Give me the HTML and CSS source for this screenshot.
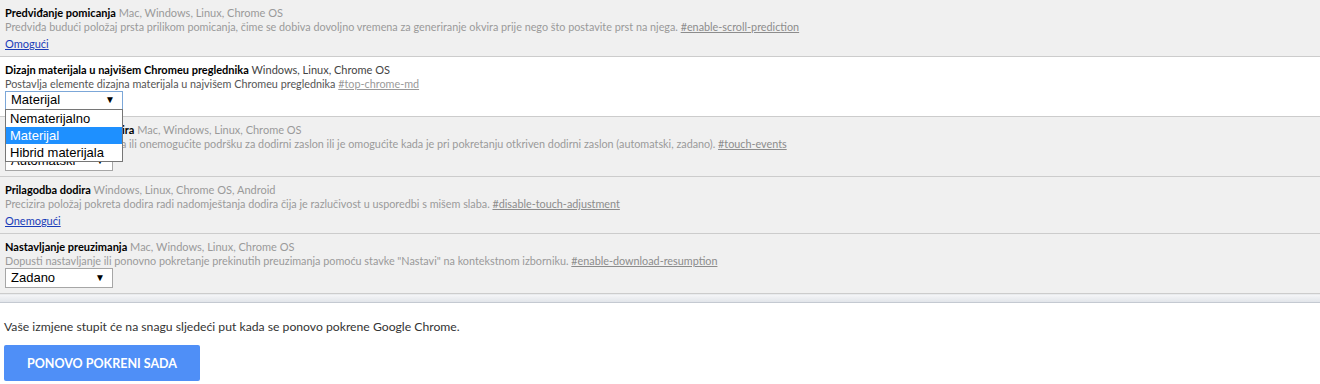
FILE: index.html
```html
<!DOCTYPE html>
<html lang="hr">
<head>
<meta charset="utf-8">
<title>Eksperimenti</title>
<link rel="stylesheet" href="styles.css">
</head>
<body>
<div class="flags">
  <div class="exp">
    <div class="exp-name"><b>Predviđanje pomicanja</b> <span class="plat">Mac, Windows, Linux, Chrome OS</span></div>
    <div class="exp-desc">Predviđa budući položaj prsta prilikom pomicanja, čime se dobiva dovoljno vremena za generiranje okvira prije nego što postavite prst na njega. <a class="perm" href="#">#enable-scroll-prediction</a></div>
    <div class="exp-act"><a class="act" href="#">Omogući</a></div>
  </div>
  <div class="exp white">
    <div class="exp-name"><b>Dizajn materijala u najvišem Chromeu preglednika</b> <span class="plat dark">Windows, Linux, Chrome OS</span></div>
    <div class="exp-desc dark">Postavlja elemente dizajna materijala u najvišem Chromeu preglednika <a class="perm" href="#">#top-chrome-md</a></div>
    <div class="sel sel-wide focused">
      <span class="sel-val">Materijal</span>
      <ul class="popup">
        <li>Nematerijalno</li>
        <li class="hl">Materijal</li>
        <li>Hibrid materijala</li>
      </ul>
    </div>
  </div>
  <div class="exp">
    <div class="exp-name"><b>Omogućite događaj dodira</b> <span class="plat">Mac, Windows, Linux, Chrome OS</span></div>
    <div class="exp-desc">Omogući događaje dodira ili onemogućite podršku za dodirni zaslon ili je omogućite kada je pri pokretanju otkriven dodirni zaslon (automatski, zadano). <a class="perm" href="#">#touch-events</a></div>
    <div class="sel"><span class="sel-val">Automatski</span></div>
  </div>
  <div class="exp">
    <div class="exp-name"><b>Prilagodba dodira</b> <span class="plat">Windows, Linux, Chrome OS, Android</span></div>
    <div class="exp-desc">Precizira položaj pokreta dodira radi nadomještanja dodira čija je razlučivost u usporedbi s mišem slaba. <a class="perm" href="#">#disable-touch-adjustment</a></div>
    <div class="exp-act"><a class="act" href="#">Onemogući</a></div>
  </div>
  <div class="exp">
    <div class="exp-name"><b>Nastavljanje preuzimanja</b> <span class="plat">Mac, Windows, Linux, Chrome OS</span></div>
    <div class="exp-desc">Dopusti nastavljanje ili ponovno pokretanje prekinutih preuzimanja pomoću stavke "Nastavi" na kontekstnom izborniku. <a class="perm" href="#">#enable-download-resumption</a></div>
    <div class="sel"><span class="sel-val">Zadano</span></div>
  </div>
</div>
<div class="shade"></div>
<div class="restart">
  <p class="restart-msg">Vaše izmjene stupit će na snagu sljedeći put kada se ponovo pokrene Google Chrome.</p>
  <button class="restart-btn" type="button">PONOVO POKRENI SADA</button>
</div>
</body>
</html>
```
FILE: styles.css
```css
html, body {
  margin: 0;
  padding: 0;
  background: #ffffff;
}
body {
  font-family: Lato, "Open Sans", sans-serif;
  font-size: 11px;
  color: #000;
  overflow: hidden;
}
.exp {
  background: #f0f0f0;
  border-bottom: 1px solid #cccccc;
  padding: 6px 5px 5px;
}
.exp.white {
  background: #ffffff;
}
.exp-name {
  line-height: 14px;
  white-space: nowrap;
}
.exp-name b {
  font-weight: 700;
  color: #000;
}
.plat {
  color: #9a9a9a;
}
.plat.dark {
  color: #444;
}
.exp-desc {
  font-size: 10.8px;
  line-height: 14px;
  color: #9a9a9a;
  white-space: nowrap;
}
.exp-desc.dark {
  color: #555;
}
.perm {
  color: #8c8c8c;
  text-decoration: underline;
}
.exp-desc.dark .perm {
  color: #999;
}
.exp-act {
  margin-top: 3px;
  line-height: 14px;
}
.act {
  color: #1a3cb8;
  text-decoration: underline;
}
.sel {
  position: relative;
  width: 108px;
  height: 20px;
  box-sizing: border-box;
  border: 1px solid #a6a6a6;
  background: #fff;
  font-family: "Liberation Sans", Arial, sans-serif;
  font-size: 13px;
  line-height: 18px;
  padding-left: 5px;
  color: #000;
}
.sel::after {
  content: "▼";
  position: absolute;
  right: 7px;
  top: 0;
  font-size: 10px;
  line-height: 18px;
}
.sel-wide {
  width: 118px;
  line-height: 16px;
}
.sel-wide::after {
  line-height: 16px;
}
.focused {
  border-color: #7ca7d8;
}
.popup {
  position: absolute;
  z-index: 10;
  left: -1px;
  top: 17px;
  width: 118px;
  box-sizing: border-box;
  margin: 0;
  padding: 0;
  list-style: none;
  background: #fff;
  border: 1px solid #767676;
}
.popup li {
  height: 17px;
  line-height: 17px;
  padding-left: 4px;
  font-size: 13px;
}
.popup li.hl {
  background: #1e90ff;
  color: #fff;
}
.shade {
  height: 7px;
  background: linear-gradient(#f4f5f7, #e2e5ea);
  border-top: 1px solid #e9ebee;
  border-bottom: 1px solid #c4c9d1;
}
.restart {
  padding: 16px 4px 0;
}
.restart-msg {
  margin: 0;
  font-size: 12.2px;
  line-height: 16px;
  color: #333;
}
.restart-btn {
  margin-top: 10px;
  width: 196px;
  height: 36px;
  border: none;
  border-radius: 2px;
  background: #4f8ff7;
  color: #fff;
  font-family: Lato, "Open Sans", sans-serif;
  font-weight: 700;
  font-size: 12.5px;
  padding: 0;
}
```
